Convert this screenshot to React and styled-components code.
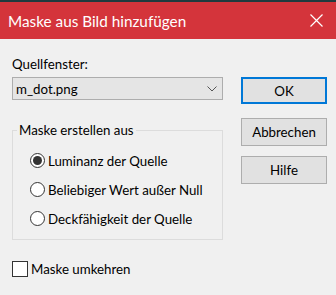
import styled, { createGlobalStyle } from "styled-components";

const Global = createGlobalStyle`
  html, body {
    margin: 0;
    padding: 0;
    background: #f0f0f0;
  }
  body {
    font-family: Lato, "Noto Sans", sans-serif;
    font-size: 13.3px;
    color: #000;
  }
`;

const Window = styled.div`
  width: 336px;
  height: 295px;
  background: #f0f0f0;
  overflow: hidden;
`;

const TopStrip = styled.div`
  height: 2px;
  background: #1f3a3e;
`;

const TitleBar = styled.div`
  height: 37px;
  background: #d4343b;
  display: flex;
  align-items: center;
  justify-content: space-between;
  padding: 0 13px 0 8px;
  color: #fff;
  font-size: 15.3px;
`;

const Body = styled.div`
  display: flex;
  padding: 0 9px 0 12px;
  gap: 18px;
`;

const LeftCol = styled.div`
  width: 211px;
  display: flex;
  flex-direction: column;
`;

const RightCol = styled.div`
  width: 86px;
  display: flex;
  flex-direction: column;
  padding-top: 38px;
`;

const Label = styled.div`
  margin-top: 16px;
  height: 22px;
  line-height: 18px;
`;

const Select = styled.div`
  height: 23px;
  box-sizing: border-box;
  border: 1px solid #adadad;
  background: #e5e5e5;
  display: flex;
  align-items: center;
  justify-content: space-between;
  padding: 0 5px 0 3px;
`;

const Group = styled.fieldset`
  margin: 21px 0 0 0;
  width: 211px;
  padding: 0;
  border: 1px solid #dcdcdc;
  height: 119px;
  box-sizing: border-box;
  min-width: 0;
`;

const Legend = styled.legend`
  margin-left: 4px;
  padding: 0 2px;
  line-height: 18px;
`;

const Options = styled.div`
  display: flex;
  flex-direction: column;
  padding: 7px 0 0 17px;
`;

const RadioRow = styled.div`
  display: flex;
  align-items: center;
  height: 29px;
  gap: 3px;
  white-space: nowrap;
`;

const RadioCircle = styled.span`
  width: 15px;
  height: 15px;
  flex: none;
  box-sizing: border-box;
  border-radius: 50%;
  border: 1px solid #333;
  background: #fff;
  display: flex;
  align-items: center;
  justify-content: center;
  &::after {
    content: "";
    width: 9px;
    height: 9px;
    border-radius: 50%;
    background: ${(p) => (p.$checked ? "#333" : "transparent")};
  }
`;

const CheckRow = styled.div`
  display: flex;
  align-items: center;
  gap: 3px;
  margin-top: 21px;
`;

const Box = styled.span`
  width: 16px;
  height: 16px;
  box-sizing: border-box;
  border: 1px solid #333;
  background: #fff;
`;

const Button = styled.div`
  height: ${(p) => p.$h || 28}px;
  box-sizing: border-box;
  margin-bottom: ${(p) => p.$mb || 0}px;
  border: ${(p) => (p.$default ? "2px solid #0078d7" : "1px solid #adadad")};
  background: #e1e1e1;
  display: flex;
  align-items: center;
  justify-content: center;
`;

const Close = () => (
  <svg width="13" height="13" viewBox="0 0 13 13">
    <path d="M0.5 0.5 L12.5 12.5 M12.5 0.5 L0.5 12.5" stroke="#fff" strokeWidth="1.2" fill="none" />
  </svg>
);

const Chevron = () => (
  <svg width="10" height="6" viewBox="0 0 10 6">
    <path d="M0.5 0.5 L5 5 L9.5 0.5" stroke="#555" strokeWidth="1" fill="none" />
  </svg>
);

const options = [
  { label: "Luminanz der Quelle", checked: true },
  { label: "Beliebiger Wert außer Null" },
  { label: "Deckfähigkeit der Quelle" },
];

export default function App() {
  return (
    <Window>
      <Global />
      <TopStrip />
      <TitleBar>
        <span>Maske aus Bild hinzufügen</span>
        <Close />
      </TitleBar>
      <Body>
        <LeftCol>
          <Label>Quellfenster:</Label>
          <Select>
            <span>m_dot.png</span>
            <Chevron />
          </Select>
          <Group>
            <Legend>Maske erstellen aus</Legend>
            <Options>
              {options.map((o) => (
                <RadioRow key={o.label}>
                  <RadioCircle $checked={o.checked} />
                  <span>{o.label}</span>
                </RadioRow>
              ))}
            </Options>
          </Group>
          <CheckRow>
            <Box />
            <span>Maske umkehren</span>
          </CheckRow>
        </LeftCol>
        <RightCol>
          <Button $default $h={27} $mb={14}>OK</Button>
          <Button $mb={10}>Abbrechen</Button>
          <Button>Hilfe</Button>
        </RightCol>
      </Body>
    </Window>
  );
}
